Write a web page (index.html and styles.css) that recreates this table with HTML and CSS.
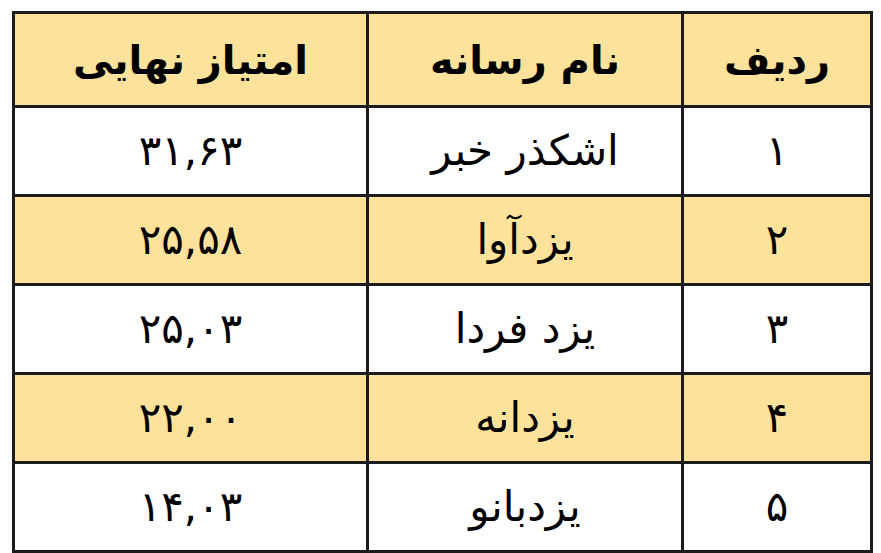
FILE: index.html
```html
<!DOCTYPE html>
<html lang="fa">
<head>
<meta charset="utf-8">
<link rel="stylesheet" href="styles.css">
</head>
<body>
<table class="scores" dir="rtl">
  <colgroup>
    <col class="c-rank">
    <col class="c-name">
    <col class="c-score">
  </colgroup>
  <thead>
    <tr class="head">
      <th>ردیف</th>
      <th>نام رسانه</th>
      <th>امتیاز نهایی</th>
    </tr>
  </thead>
  <tbody>
    <tr class="odd"><td>۱</td><td>اشکذر خبر</td><td>۳۱,۶۳</td></tr>
    <tr class="even"><td>۲</td><td>یزدآوا</td><td>۲۵,۵۸</td></tr>
    <tr class="odd"><td>۳</td><td>یزد فردا</td><td>۲۵,۰۳</td></tr>
    <tr class="even"><td>۴</td><td>یزدانه</td><td>۲۲,۰۰</td></tr>
    <tr class="odd"><td>۵</td><td>یزدبانو</td><td>۱۴,۰۳</td></tr>
    <tr class="even"><td></td><td></td><td></td></tr>
  </tbody>
</table>
</body>
</html>
```
FILE: styles.css
```css
html, body {
  margin: 0;
  padding: 0;
  background: #ffffff;
  overflow: hidden;
}
body {
  padding: 11px 0 0 12px;
  font-family: "DejaVu Sans", sans-serif;
}
.scores {
  border-collapse: collapse;
  width: 858px;
  table-layout: fixed;
  direction: rtl;
}
.c-rank { width: 189px; }
.c-name { width: 315px; }
.c-score { width: 354px; }
.scores th,
.scores td {
  border: 3px solid #1c1c1c;
  text-align: center;
  vertical-align: middle;
  padding: 0;
  color: #000;
  line-height: 1;
}
.scores th {
  height: 91px;
  font-size: 40px;
  font-weight: bold;
}
.scores td {
  height: 86px;
  font-size: 42px;
  font-weight: normal;
}
.head, .even { background: #fde29b; }
.odd { background: #ffffff; }
```
